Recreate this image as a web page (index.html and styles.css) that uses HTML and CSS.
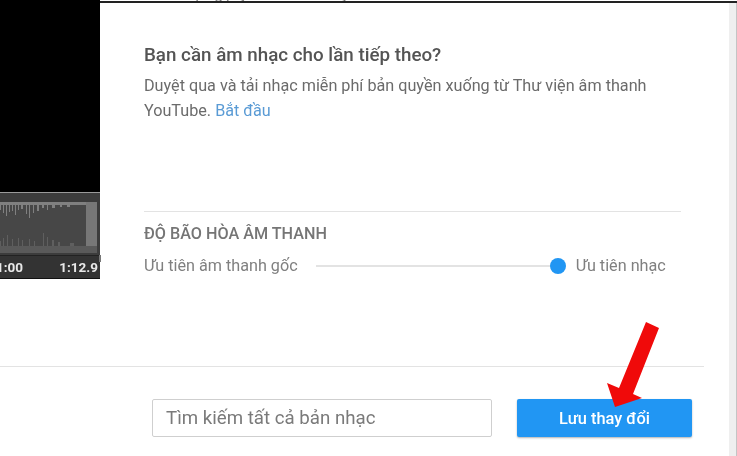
FILE: index.html
```html
<!DOCTYPE html>
<html>
<head>
  <title>Thêm nhạc</title>
  <link rel="stylesheet" href="styles.css">
</head>
<body>
  <div class="page">
    <div class="main">
      <div class="preview">
        <div class="video"></div>
        <div class="wave">
          <svg class="wave-graph" width="97" height="51" viewBox="0 0 97 51">
            <rect width="97" height="44" fill="#474747"/>
            <path d="M0 0V8H1V3H3V11H4V3H6V14H7V3H9V10H10V3H12V9H13V3H15V13H16V3H18V8H19V3H21V7H23V3H26V12H27V3H29V16H30V3H33V11H34V3H37V9H39V3H42V6H44V3H47V8H48V3H52V6H55V3H60V5H62V3H67V5H70V3H86V1H86V0Z" fill="#808080"/>
            <path d="M0 44V39H1V44H3V36H4V44H7V33H8V44H12V37H13V44H18V36H19V44H22V38H23V44H29V37H30V44H34V39H35V44H43V31H44V44H47V35H48V44H52V38H54V44H58V40H60V44H70V41H74V44Z" fill="#5f5f5f"/>
            <rect x="86" width="11" height="44" fill="#777"/>
            <rect y="44" width="97" height="7" fill="#5a5a5a"/>
          </svg>
        </div>
        <div class="times">
          <span>1:00</span>
          <span>1:12.9</span>
        </div>
      </div>

      <div class="content">
        <p class="cut-line">Bản nhạc gợi ý cho video này</p>
        <h2 class="promo-title">Bạn cần âm nhạc cho lần tiếp theo?</h2>
        <p class="promo-text">Duyệt qua và tải nhạc miễn phí bản quyền xuống từ Thư viện âm thanh YouTube. <a class="link" href="#">Bắt đầu</a></p>

        <div class="balance">
          <h3 class="balance-title">ĐỘ BÃO HÒA ÂM THANH</h3>
          <div class="balance-row">
            <span>Ưu tiên âm thanh gốc</span>
            <div class="slider"><div class="knob"></div></div>
            <span>Ưu tiên nhạc</span>
          </div>
        </div>
      </div>
    </div>

    <div class="footer">
      <input class="search" type="text" placeholder="Tìm kiếm tất cả bản nhạc">
      <button class="btnSave">Lưu thay đổi</button>
    </div>

    <svg class="arrow" width="60" height="90" viewBox="0 0 60 90">
      <polygon points="41,3 54,9 28,75 37,79 10,88 2,64 14,69" fill="#f00a0a"/>
    </svg>
  </div>
</body>
</html>
```

FILE: styles.css
```css
* {
  box-sizing: border-box;
}

html, body {
  margin: 0;
  height: 100%;
  background: #fff;
  overflow: hidden;
}

.page {
  position: relative;
  width: 737px;
  height: 456px;
  font-family: Roboto, "Liberation Sans", sans-serif;
  color: #757575;
  overflow: hidden;
  filter: blur(0.35px);
}

/* dark edge on top of the dialog */
.page::before {
  content: "";
  position: absolute;
  top: 1px;
  left: 0;
  right: 0;
  height: 2px;
  background: #222;
}

/* scrollbar track */
.page::after {
  content: "";
  position: absolute;
  top: 3px;
  right: 0;
  bottom: 0;
  width: 7px;
  background: #efefef;
  border-right: 1px solid #c4c4c4;
}

.main {
  display: flex;
  height: 366px;
}

.preview {
  position: relative;
  width: 100px;
  flex-shrink: 0;
}

.video {
  height: 192px;
  background: #000;
}

.wave {
  height: 63px;
  padding: 9px 3px 0 0;
  background: #3c3c3c;
  border-top: 1px solid #9a9a9a;
}

.wave-graph {
  display: block;
}

.times {
  display: flex;
  justify-content: space-between;
  align-items: center;
  height: 24px;
  padding-right: 2px;
  margin-left: -4px;
  background: #333;
  color: #e8e8e8;
  font-size: 13.5px;
  font-weight: 700;
  border-top: 1px solid #222;
  border-bottom: 1px solid #111;
}

.preview::after {
  content: "";
  position: absolute;
  top: 255px;
  left: 99px;
  width: 2px;
  height: 7px;
  background: #777;
}

.content {
  flex: 0 0 537px;
  margin-left: 44px;
}

.cut-line {
  margin: -14px 0 0;
  font-size: 16px;
  line-height: 16px;
}

.promo-title {
  margin: 41px 0 0;
  font-size: 18.8px;
  font-weight: 500;
  line-height: 24px;
  color: #545454;
}

.promo-text {
  margin: 6px 0 0;
  font-size: 16.2px;
  line-height: 25px;
  color: #6b6b6b;
}

.link {
  color: #5a9bd5;
  text-decoration: none;
}

.balance {
  margin-top: 88px;
  padding-top: 12px;
  border-top: 1px solid #e3e3e3;
}

.balance-title {
  margin: 0;
  font-size: 16.2px;
  font-weight: 500;
  line-height: 20px;
  color: #757575;
}

.balance-row {
  display: flex;
  align-items: center;
  margin-top: 11px;
  font-size: 16.2px;
  line-height: 22px;
  color: #808080;
}

.slider {
  position: relative;
  width: 242px;
  height: 2px;
  margin: 0 18px;
  background: #e3e3e3;
}

.knob {
  position: absolute;
  top: -7px;
  right: -8px;
  width: 16px;
  height: 16px;
  border-radius: 50%;
  background: #2196f3;
}

.footer {
  display: flex;
  align-items: flex-start;
  width: 704px;
  height: 90px;
  padding: 32px 0 0 152px;
  border-top: 1px solid #e3e3e3;
}

.search {
  width: 340px;
  height: 38px;
  padding: 0 13px;
  border: 1px solid #cfcfcf;
  border-radius: 2px;
  font-family: inherit;
  font-size: 18.7px;
  color: #757575;
}

.search::placeholder {
  color: #7a7a7a;
  opacity: 1;
}

.btnSave {
  width: 175px;
  height: 38px;
  margin-left: 25px;
  border: none;
  border-radius: 2px;
  background: #2196f3;
  box-shadow: 0 1px 2px rgba(0, 0, 0, 0.3);
  color: #fff;
  font-family: inherit;
  font-size: 16.4px;
  font-weight: 500;
}

.arrow {
  position: absolute;
  top: 319px;
  left: 605px;
}
```
